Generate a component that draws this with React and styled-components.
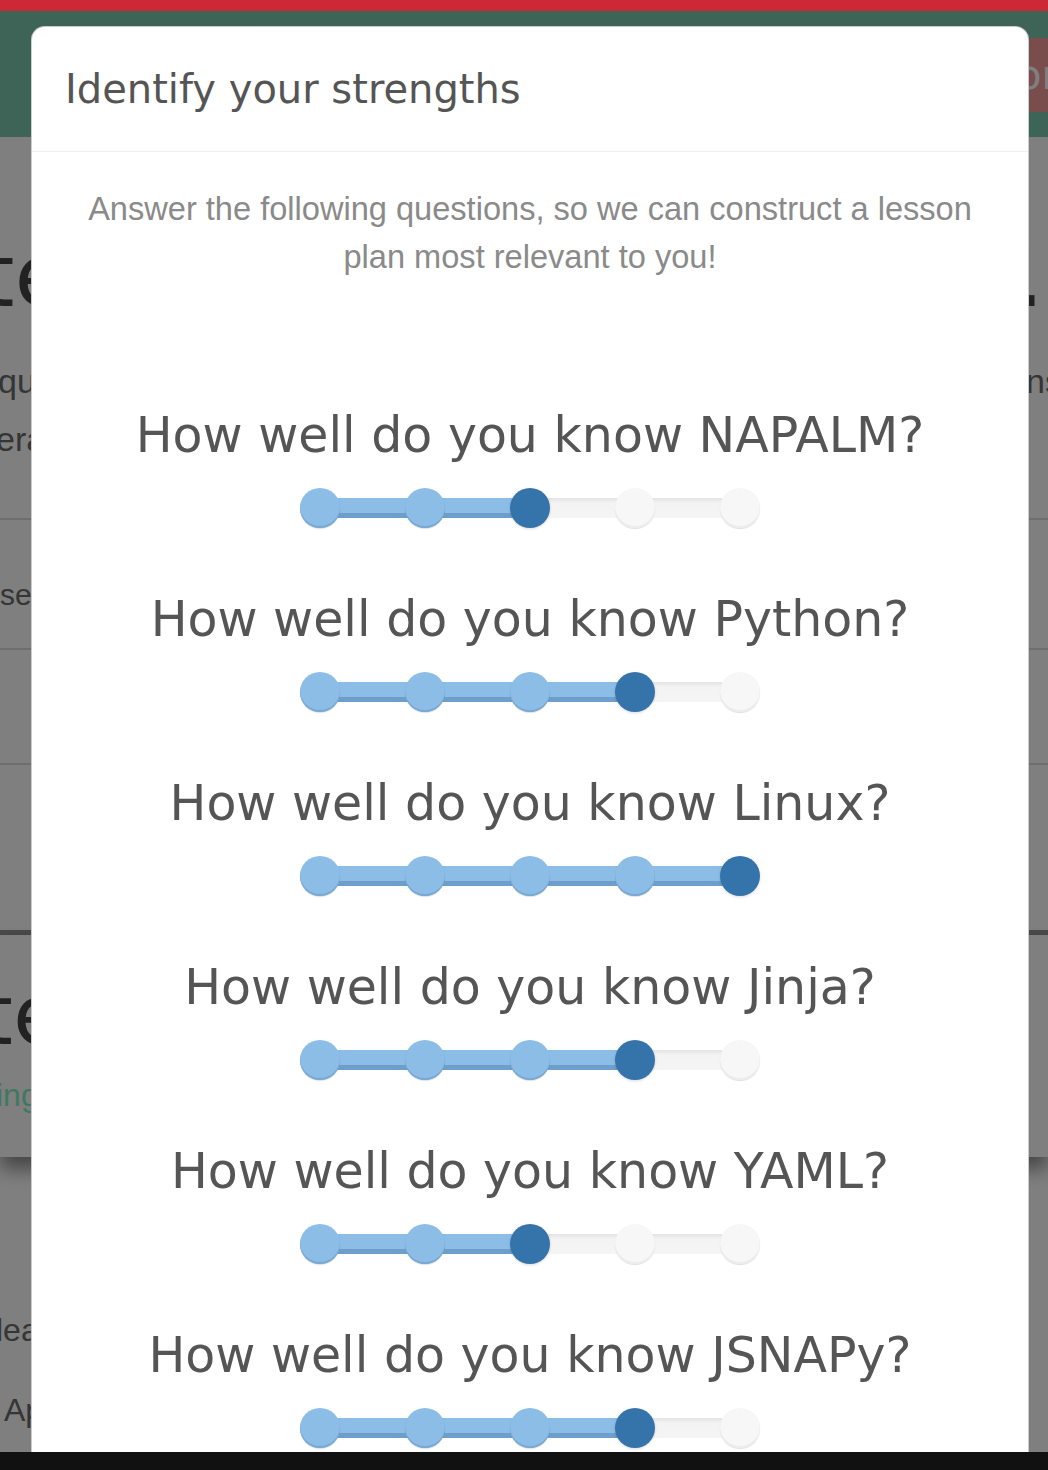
import React from "react";
import styled, { createGlobalStyle } from "styled-components";

const GlobalStyle = createGlobalStyle`
  html, body {
    margin: 0;
    padding: 0;
    height: 1470px;
    overflow: hidden;
    background: #fff;
    font-family: "Liberation Sans", Arial, sans-serif;
  }
`;

const Page = styled.div`
  position: relative;
  width: 1048px;
  height: 1470px;
  overflow: hidden;
  background: #fff;
`;

const TopStripe = styled.div`
  position: relative;
  z-index: 3;
  height: 11px;
  background: #cc2835;
`;

const Header = styled.header`
  height: 126px;
  background: #7bc8ae;
  display: flex;
  align-items: center;
  justify-content: flex-end;
`;

const HeaderButton = styled.div`
  background: #f49b9b;
  color: #fff;
  font-family: "DejaVu Sans", sans-serif;
  font-size: 40px;
  height: 74px;
  display: flex;
  align-items: center;
  padding: 0 18px 0 40px;
  margin-right: -28px;
  margin-top: 2px;
`;

const Hero = styled.section`
  height: 383px;
  padding-top: 84px;
  box-sizing: border-box;
  border-bottom: 2px solid #dcdcdc;
`;

const BgLine = styled.div`
  display: flex;
  justify-content: space-between;
  white-space: nowrap;
  overflow: hidden;
  font-family: ${(p) => (p.$big ? '"DejaVu Sans", sans-serif' : '"Liberation Sans", sans-serif')};
  font-size: ${(p) => p.$size}px;
  line-height: ${(p) => p.$lh}px;
  color: ${(p) => p.$color || "#6a6a6a"};
  margin-top: ${(p) => p.$top || 0}px;
  margin-left: ${(p) => p.$shift || 0}px;
  margin-right: ${(p) => p.$shiftRight || 0}px;
`;

const Row = styled.div`
  height: ${(p) => p.$h}px;
  box-sizing: border-box;
  border-bottom: 2px solid #dcdcdc;
  display: flex;
  align-items: center;
  padding-top: ${(p) => p.$pad || 0}px;
  font-size: 30px;
  color: #6a6a6a;
`;

const Spacer = styled.div`
  height: ${(p) => p.$h}px;
  border-bottom: ${(p) => (p.$thick ? "5px solid #939393" : "none")};
`;

const Feature = styled.section`
  height: 222px;
  padding-top: 30px;
  box-sizing: border-box;
  box-shadow: 0 12px 18px rgba(0, 0, 0, 0.45);
  position: relative;
`;

const Footer = styled.section`
  padding-top: 133px;
`;

const Overlay = styled.div`
  position: absolute;
  top: 11px;
  left: 0;
  right: 0;
  bottom: 0;
  z-index: 2;
  background: rgba(0, 0, 0, 0.5);
  padding-top: 15px;
  padding-left: 31px;
`;

const Modal = styled.div`
  width: 998px;
  height: 1500px;
  box-sizing: border-box;
  background: #fff;
  border: 1px solid rgba(0, 0, 0, 0.2);
  border-bottom: none;
  border-radius: 14px 14px 0 0;
`;

const ModalHeader = styled.div`
  height: 125px;
  box-sizing: border-box;
  border-bottom: 1px solid #f0f0f0;
  display: flex;
  align-items: center;
  padding-left: 33px;
`;

const Title = styled.h4`
  margin: 0;
  font-family: "DejaVu Sans", sans-serif;
  font-weight: normal;
  font-size: 40px;
  color: #555;
`;

const ModalBody = styled.div`
  padding: 33px 40px 0;
  display: flex;
  flex-direction: column;
  align-items: center;
`;

const Intro = styled.p`
  margin: 0;
  text-align: center;
  font-size: 32.6px;
  line-height: 48px;
  color: #8a8a8a;
`;

const Questions = styled.div`
  margin-top: 127px;
  display: flex;
  flex-direction: column;
  align-items: center;
  gap: 64px;
`;

const Question = styled.div`
  display: flex;
  flex-direction: column;
  align-items: center;
`;

const Heading = styled.h3`
  margin: 0;
  font-family: "DejaVu Sans", sans-serif;
  font-weight: normal;
  font-size: 49px;
  line-height: 56px;
  color: #555;
  white-space: nowrap;
`;

const SliderWrap = styled.div`
  margin-top: 24px;
  height: 40px;
  display: flex;
  align-items: center;
`;

const Rail = styled.div`
  width: 460px;
  height: 20px;
  border-radius: 10px;
  display: flex;
  align-items: center;
  justify-content: space-between;
  background:
    linear-gradient(to bottom, #8bbde7 0, #8bbde7 15px, #6e9ecb 15px, #6e9ecb 20px) 0 0 / ${(p) => p.$fill}px 100% no-repeat,
    linear-gradient(to bottom, #e3e3e3 0, #f3f3f3 5px, #f5f5f5 100%);
`;

const handleBg = {
  done: "#8bbde7",
  active: "#3574ab",
  todo: "#f7f7f7",
};

const handleShadow = {
  done: "inset 0 -2px 0 #79a8d3, 0 1px 1px rgba(0, 0, 0, 0.12)",
  active: "0 1px 3px rgba(0, 0, 0, 0.15)",
  todo: "inset 0 -2px 0 #ececec, 0 1px 1px rgba(0, 0, 0, 0.12)",
};

const Handle = styled.span`
  width: 40px;
  height: 40px;
  border-radius: 50%;
  flex-shrink: 0;
  background: ${(p) => handleBg[p.$state]};
  box-shadow: ${(p) => handleShadow[p.$state]};
`;

const BottomBar = styled.div`
  position: absolute;
  left: 0;
  right: 0;
  bottom: 0;
  height: 18px;
  background: #111;
  z-index: 4;
`;

const skills = [
  { name: "NAPALM", level: 3 },
  { name: "Python", level: 4 },
  { name: "Linux", level: 5 },
  { name: "Jinja", level: 4 },
  { name: "YAML", level: 3 },
  { name: "JSNAPy", level: 4 },
];

const Slider = ({ level }) => {
  const idx = level - 1;
  return (
    <SliderWrap>
      <Rail $fill={20 + idx * 105}>
        {[0, 1, 2, 3, 4].map((i) => (
          <Handle
            key={i}
            $state={i < idx ? "done" : i === idx ? "active" : "todo"}
          />
        ))}
      </Rail>
    </SliderWrap>
  );
};

const App = () => {
  return (
    <Page>
      <GlobalStyle />
      <TopStripe />
      <Header>
        <HeaderButton>Donor</HeaderButton>
      </Header>

      <Hero>
        <BgLine $big $size={88} $lh={110} $color="#444" $shift={-20} $shiftRight={4}>
          <span>te</span>
          <span>y.</span>
        </BgLine>
        <BgLine $size={34} $lh={58} $top={21} $shift={-2} $shiftRight={-14}>
          <span>quick</span>
          <span>ions</span>
        </BgLine>
        <BgLine $size={34} $lh={58} $shift={-4}>
          <span>era</span>
        </BgLine>
      </Hero>
      <Row $h={130} $pad={22}>
        <span>see</span>
      </Row>
      <Row $h={115} />
      <Spacer $h={165} $thick />
      <Feature>
        <BgLine $big $size={84} $lh={100} $color="#444" $shift={-20}>
          <span>te</span>
        </BgLine>
        <BgLine $size={32} $lh={60} $color="#7ef1c3" $shift={-4}>
          <span>ing</span>
        </BgLine>
      </Feature>
      <Footer>
        <BgLine $size={32} $lh={80} $shift={-4}>
          <span>lea</span>
        </BgLine>
        <BgLine $size={32} $lh={80} $shift={4}>
          <span>Apply</span>
        </BgLine>
      </Footer>

      <Overlay>
        <Modal>
          <ModalHeader>
            <Title>Identify your strengths</Title>
          </ModalHeader>
          <ModalBody>
            <Intro>
              Answer the following questions, so we can construct a lesson
              plan most relevant to you!
            </Intro>
            <Questions>
              {skills.map((s) => (
                <Question key={s.name}>
                  <Heading>How well do you know {s.name}?</Heading>
                  <Slider level={s.level} />
                </Question>
              ))}
            </Questions>
          </ModalBody>
        </Modal>
      </Overlay>
      <BottomBar />
    </Page>
  );
};

export default App;
